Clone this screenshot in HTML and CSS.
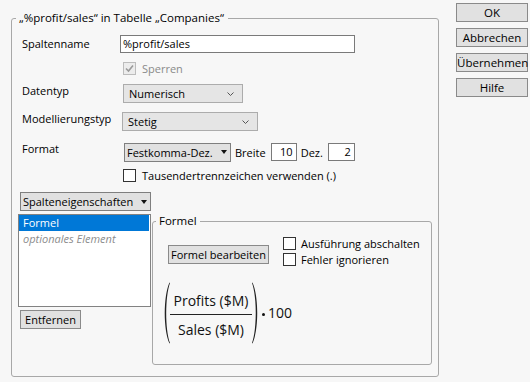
FILE: index.html
```html
<!DOCTYPE html>
<html lang="de">
<head>
<meta charset="utf-8">
<link rel="stylesheet" href="styles.css">
</head>
<body>
<div class="page">
  <fieldset class="group">
    <legend class="group-title">„%profit/sales“ in Tabelle „Companies“</legend>
    <div class="row row-name">
      <span class="label">Spaltenname</span>
      <div class="textbox name-box">%profit/sales</div>
    </div>
    <div class="row row-lock">
      <span class="label"></span>
      <span class="check check-disabled"><svg width="11" height="11" viewBox="0 0 11 11"><path d="M2 5.5 L4.5 8 L9 2.5" fill="none" stroke="#9a9a9a" stroke-width="1.6"/></svg></span>
      <span class="check-text disabled">Sperren</span>
    </div>
    <div class="row row-type">
      <span class="label raised">Datentyp</span>
      <div class="combo combo-type">Numerisch<svg class="chev" width="7" height="4" viewBox="0 0 7 4"><path d="M0.5 0.5 L3.5 3.5 L6.5 0.5" fill="none" stroke="#555" stroke-width="1"/></svg></div>
    </div>
    <div class="row row-model">
      <span class="label raised">Modellierungstyp</span>
      <div class="combo combo-model">Stetig<svg class="chev" width="7" height="4" viewBox="0 0 7 4"><path d="M0.5 0.5 L3.5 3.5 L6.5 0.5" fill="none" stroke="#555" stroke-width="1"/></svg></div>
    </div>
    <div class="row row-format">
      <span class="label raised">Format</span>
      <div class="dropbtn format-btn">Festkomma-Dez.<span class="tri"></span></div>
      <span class="inline-label">Breite</span>
      <div class="textbox num-box">10</div>
      <span class="inline-label">Dez.</span>
      <div class="textbox num-box dec-box">2</div>
    </div>
    <div class="row row-thousands">
      <span class="label"></span>
      <span class="check"></span>
      <span class="check-text">Tausendertrennzeichen verwenden (.)</span>
    </div>
    <div class="dropbtn props-btn">Spalteneigenschaften<span class="tri"></span></div>
    <div class="bottom">
      <div class="left-col">
        <div class="listbox">
          <div class="list-item selected">Formel</div>
          <div class="list-item optional">optionales Element</div>
        </div>
        <div class="btn remove-btn">Entfernen</div>
      </div>
      <fieldset class="subgroup">
        <legend class="sub-title">Formel</legend>
        <div class="formula-area">
          <div class="formula-top">
            <div class="btn edit-btn">Formel bearbeiten</div>
            <div class="checks">
              <div class="check-row"><span class="check"></span><span class="check-text">Ausführung abschalten</span></div>
              <div class="check-row"><span class="check"></span><span class="check-text">Fehler ignorieren</span></div>
            </div>
          </div>
          <div class="formula">
            <svg class="paren" width="7" height="62" viewBox="0 0 7 62"><path d="M6.5 0.5 C0.2 14 0.2 48 6.5 61.5 L7 61 C2 47 2 15 7 1 Z" fill="#222"/></svg>
            <div class="fraction">
              <div class="numer">Profits ($M)</div>
              <div class="frac-line"></div>
              <div class="denom">Sales ($M)</div>
            </div>
            <svg class="paren" width="7" height="62" viewBox="0 0 7 62"><path d="M0.5 0.5 C6.8 14 6.8 48 0.5 61.5 L0 61 C5 47 5 15 0 1 Z" fill="#222"/></svg>
            <span class="dot"></span>
            <span class="factor">100</span>
          </div>
        </div>
      </fieldset>
    </div>
  </fieldset>
  <div class="side">
    <div class="btn side-btn">OK</div>
    <div class="btn side-btn">Abbrechen</div>
    <div class="btn side-btn">Übernehmen</div>
    <div class="btn side-btn">Hilfe</div>
  </div>
</div>
</body>
</html>
```

FILE: styles.css
```css
* { box-sizing: border-box; }
html, body {
  margin: 0;
  padding: 0;
  background: #f7f7f7;
}
body {
  width: 530px;
  height: 382px;
  overflow: hidden;
  font-family: "Open Sans", "Noto Sans", sans-serif;
  font-size: 11px;
  color: #000;
}
.page {
  display: flex;
  align-items: flex-start;
  padding: 3px 0 0 11px;
}
.group {
  margin: 7px 0 0 0;
  width: 428px;
  border: 1px solid #a8a8a8;
  border-radius: 3px;
  padding: 0 6px 11px 6px;
  min-width: 0;
}
.group-title {
  margin-left: -2px;
  padding: 0 4px 0 3px;
  line-height: 16px;
  font-size: 11.5px;
}
.row {
  display: flex;
  align-items: center;
}
.label {
  width: 100px;
  margin-left: 4px;
  flex: none;
  line-height: 16px;
  white-space: nowrap;
}
.label.raised { margin-bottom: 6px; }
.row-name { margin-top: 9px; height: 18px; }
.row-lock { margin-top: 9px; height: 13px; }
.row-type { margin-top: 9px; height: 19px; }
.row-model { margin-top: 9px; height: 19px; }
.row-format { margin-top: 12px; height: 18px; }
.row-thousands { margin-top: 8px; height: 13px; }

.textbox {
  height: 18px;
  background: #fff;
  border: 1px solid #7a7a7a;
  line-height: 16px;
  padding: 0 2px;
  white-space: nowrap;
}
.name-box { width: 235px; margin-left: -2px; }
.num-box { width: 26px; text-align: right; padding-right: 3px; }
.dec-box { width: 27px; }
.inline-label { margin: 0 5px 0 4px; }

.check {
  width: 13px;
  height: 13px;
  border: 1px solid #333;
  background: #fff;
  margin-left: 1px;
  flex: none;
  display: flex;
  align-items: center;
  justify-content: center;
}
.check-disabled {
  border-color: #bcbcbc;
  background: #ececec;
}
.check-text { margin-left: 6px; line-height: 16px; white-space: nowrap; }
.disabled { color: #8a8a8a; }

.combo {
  height: 19px;
  background: #e5e5e5;
  border: 1px solid #acacac;
  display: flex;
  align-items: center;
  justify-content: space-between;
  padding: 0 8px 0 5px;
  margin-left: 1px;
}
.combo-type { width: 120px; }
.combo-model { width: 136px; margin-left: 0; }
.chev { flex: none; }

.dropbtn {
  height: 19px;
  background: #e1e1e1;
  border: 1px solid #7f7f7f;
  display: flex;
  align-items: center;
  justify-content: space-between;
  padding: 0 3px 0 2px;
  white-space: nowrap;
}
.tri {
  width: 0;
  height: 0;
  border-left: 3.5px solid transparent;
  border-right: 3.5px solid transparent;
  border-top: 4px solid #111;
  margin-left: 4px;
}
.format-btn { width: 107px; margin-left: 2px; }
.props-btn {
  width: 131px;
  margin: 10px 0 0 2px;
}

.bottom {
  display: flex;
  align-items: flex-start;
  margin-top: 2px;
}
.left-col {
  display: flex;
  flex-direction: column;
  align-items: flex-start;
  width: 133px;
  flex: none;
}
.listbox {
  margin-top: 1px;
  width: 133px;
  height: 93px;
  background: #fff;
  border: 1px solid #828282;
}
.list-item {
  height: 16px;
  line-height: 16px;
  padding-left: 4px;
  white-space: nowrap;
}
.list-item.selected {
  background: #0078d7;
  color: #fff;
  margin-right: 1px;
}
.list-item.optional {
  color: #8c8c8c;
  font-style: italic;
}

.btn {
  height: 19px;
  line-height: 17px;
  background: #e1e1e1;
  border: 1px solid #8a8a8a;
  text-align: center;
  white-space: nowrap;
}
.remove-btn { width: 61px; margin: 3px 0 0 2px; }

.subgroup {
  margin: 0 0 0 1px;
  width: 281px;
  border: 1px solid #a8a8a8;
  border-radius: 3px;
  padding: 0;
  min-width: 0;
}
.sub-title {
  margin-left: 3px;
  padding: 0 3px;
  line-height: 16px;
  font-size: 11.5px;
}
.formula-area {
  padding: 8px 0 20px 10px;
}
.formula-top {
  display: flex;
  align-items: flex-start;
}
.edit-btn {
  width: 101px;
  margin: 8px 0 0 5px;
}
.checks {
  display: flex;
  flex-direction: column;
  gap: 3px;
  margin-left: 13px;
}
.check-row {
  display: flex;
  align-items: center;
  height: 13px;
}
.check-row .check-text { margin-left: 5px; }

.formula {
  display: flex;
  align-items: center;
  margin-top: 16px;
  font-size: 14px;
  color: #111;
}
.fraction {
  height: 62px;
  width: 82px;
  display: flex;
  flex-direction: column;
  align-items: center;
  padding-top: 9px;
}
.numer, .denom {
  line-height: 20px;
  white-space: nowrap;
}
.frac-line {
  width: 82px;
  height: 1px;
  background: #222;
  margin: 3px 0 5px;
}
.dot {
  width: 3px;
  height: 3px;
  border-radius: 50%;
  background: #111;
  margin: 2px 3px 0 3px;
}
.factor { line-height: 20px; }

.side {
  display: flex;
  flex-direction: column;
  gap: 6px;
  margin-left: 17px;
}
.side-btn {
  width: 72px;
  font-size: 11.5px;
  padding: 0;
}
```
